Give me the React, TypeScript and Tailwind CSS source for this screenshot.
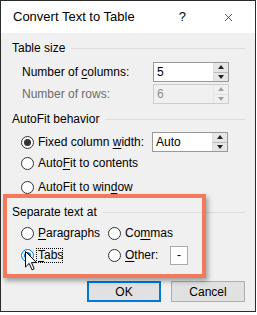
import { X } from "lucide-react";

const font = { fontFamily: '"Liberation Sans", Arial, sans-serif' };

function U({ children }: { children: string }) {
  return <span className="underline underline-offset-2 decoration-1">{children}</span>;
}

function GroupHeader({ label, mt }: { label: string; mt: string }) {
  return (
    <div className={`flex h-[20px] items-center pl-[11px] pr-[10px] ${mt}`}>
      <span className="whitespace-nowrap">{label}</span>
      <div className="ml-[6px] h-px flex-1 bg-[#dcdcdc]" />
    </div>
  );
}

function Radio({ checked, focus }: { checked?: boolean; focus?: boolean }) {
  return (
    <span
      className={`flex h-[13px] w-[13px] shrink-0 items-center justify-center rounded-full border bg-white ${
        focus ? "border-[#0078d7]" : "border-[#333333]"
      }`}
    >
      {checked && (
        <span className={`h-[7px] w-[7px] rounded-full ${focus ? "bg-[#0078d7]" : "bg-[#333333]"}`} />
      )}
    </span>
  );
}

function Spinner({ value, disabled }: { value: string; disabled?: boolean }) {
  return (
    <div
      className={`flex h-[20px] w-[76px] border ${
        disabled ? "border-[#cccccc] bg-[#f0f0f0] text-[#8d8d8d]" : "border-[#999999] bg-white"
      }`}
    >
      <div className="flex flex-1 items-center pl-[3px]">{value}</div>
      <div className={`flex w-[15px] flex-col border-l ${disabled ? "border-[#e5e5e5]" : "border-[#dddddd]"}`}>
        <div className={`flex flex-1 items-center justify-center ${disabled ? "bg-[#f0f0f0]" : "bg-[#e6e6e6]"}`}>
          <span className={`h-0 w-0 border-x-[3.5px] border-b-[4px] border-x-transparent ${disabled ? "border-b-[#a0a0a0]" : "border-b-[#222222]"}`} />
        </div>
        <div className={`h-px ${disabled ? "bg-[#e0e0e0]" : "bg-[#bbbbbb]"}`} />
        <div className={`flex flex-1 items-center justify-center ${disabled ? "bg-[#f0f0f0]" : "bg-[#e6e6e6]"}`}>
          <span className={`h-0 w-0 border-x-[3.5px] border-t-[4px] border-x-transparent ${disabled ? "border-t-[#a0a0a0]" : "border-t-[#222222]"}`} />
        </div>
      </div>
    </div>
  );
}

export default function App() {
  return (
    <div className="h-[315px] w-[257px] bg-white text-[12px] text-black" style={font}>
      <div className="relative flex h-[312px] w-[256px] flex-col border border-[#2b2b2b]">
        {/* title bar */}
        <div className="flex h-[32px] items-center bg-white pl-[12px]">
          <span className="flex-1 text-[13px]">Convert Text to Table</span>
          <span className="mr-[36px] text-[13px]">?</span>
          <X size={13} strokeWidth={1.2} className="mr-[20px]" />
        </div>

        <div className="flex flex-1 flex-col bg-[#f0f0f0]">
          <GroupHeader label="Table size" mt="mt-[5px]" />

          <div className="mt-[4px] flex h-[20px] items-center pl-[21px]">
            <span className="w-[131px]">
              Number of <U>c</U>olumns:
            </span>
            <Spinner value="5" />
          </div>
          <div className="mt-[2px] flex h-[20px] items-center pl-[21px]">
            <span className="w-[131px] text-[#6d6d6d]">Number of rows:</span>
            <Spinner value="6" disabled />
          </div>

          <GroupHeader label="AutoFit behavior" mt="mt-[5px]" />

          <div className="mt-[3px] flex h-[20px] items-center pl-[20px]">
            <Radio checked />
            <span className="ml-[4px] w-[114px]">
              Fixed column <U>w</U>idth:
            </span>
            <div className="flex h-[20px] w-[76px] border border-[#999999] bg-white">
              <div className="flex flex-1 items-center pl-[3px]">Auto</div>
              <div className="flex w-[15px] flex-col border-l border-[#dddddd]">
                <div className="flex flex-1 items-center justify-center bg-[#e6e6e6]">
                  <span className="h-0 w-0 border-x-[3.5px] border-b-[4px] border-x-transparent border-b-[#222222]" />
                </div>
                <div className="h-px bg-[#bbbbbb]" />
                <div className="flex flex-1 items-center justify-center bg-[#e6e6e6]">
                  <span className="h-0 w-0 border-x-[3.5px] border-t-[4px] border-x-transparent border-t-[#222222]" />
                </div>
              </div>
            </div>
          </div>
          <div className="mt-[1px] flex h-[20px] items-center pl-[20px]">
            <Radio />
            <span className="ml-[4px]">
              Auto<U>F</U>it to contents
            </span>
          </div>
          <div className="mt-[4px] flex h-[20px] items-center pl-[20px]">
            <Radio />
            <span className="ml-[4px]">
              AutoFit to win<U>d</U>ow
            </span>
          </div>

          <GroupHeader label="Separate text at" mt="mt-[5px]" />

          <div className="mt-[1px] flex h-[20px] items-center pl-[20px]">
            <Radio />
            <span className="ml-[4px] w-[70px]">
              <U>P</U>aragraphs
            </span>
            <Radio />
            <span className="ml-[4px]">
              Co<U>m</U>mas
            </span>
          </div>
          <div className="mt-[2px] flex h-[20px] items-center pl-[20px]">
            <Radio checked focus />
            <span className="ml-[2px] mr-[45px] w-[27px] border border-dotted border-black px-[1px] leading-[13px]">
              <U>T</U>abs
            </span>
            <Radio />
            <span className="ml-[4px] w-[45px]">
              <U>O</U>ther:
            </span>
            <div className="flex h-[19px] w-[18px] items-center justify-center border border-[#aaaaaa] bg-white">
              -
            </div>
          </div>

          <div className="mt-[16px] flex justify-end gap-[10px] pr-[10px]">
            <button className="h-[21px] w-[74px] border-2 border-[#0078d7] bg-[#e1e1e1]">OK</button>
            <button className="h-[21px] w-[74px] border border-[#adadad] bg-[#e1e1e1]">Cancel</button>
          </div>
        </div>

        {/* highlight annotation */}
        <div className="pointer-events-none absolute left-[2px] top-[193px] h-[84px] w-[203px] border-[4px] border-[#f4785b] shadow-[2px_3px_5px_rgba(0,0,0,0.35)]" />

        {/* mouse cursor */}
        <svg className="absolute left-[24px] top-[250px]" width="13" height="20" viewBox="0 0 13 20">
          <path
            d="M0.5 0.5 L0.5 16 L4.2 12.4 L7 18.8 L9.2 17.8 L6.5 11.6 L11.5 11.6 Z"
            fill="white"
            stroke="black"
            strokeWidth="1"
            strokeLinejoin="round"
          />
        </svg>
      </div>
    </div>
  );
}
